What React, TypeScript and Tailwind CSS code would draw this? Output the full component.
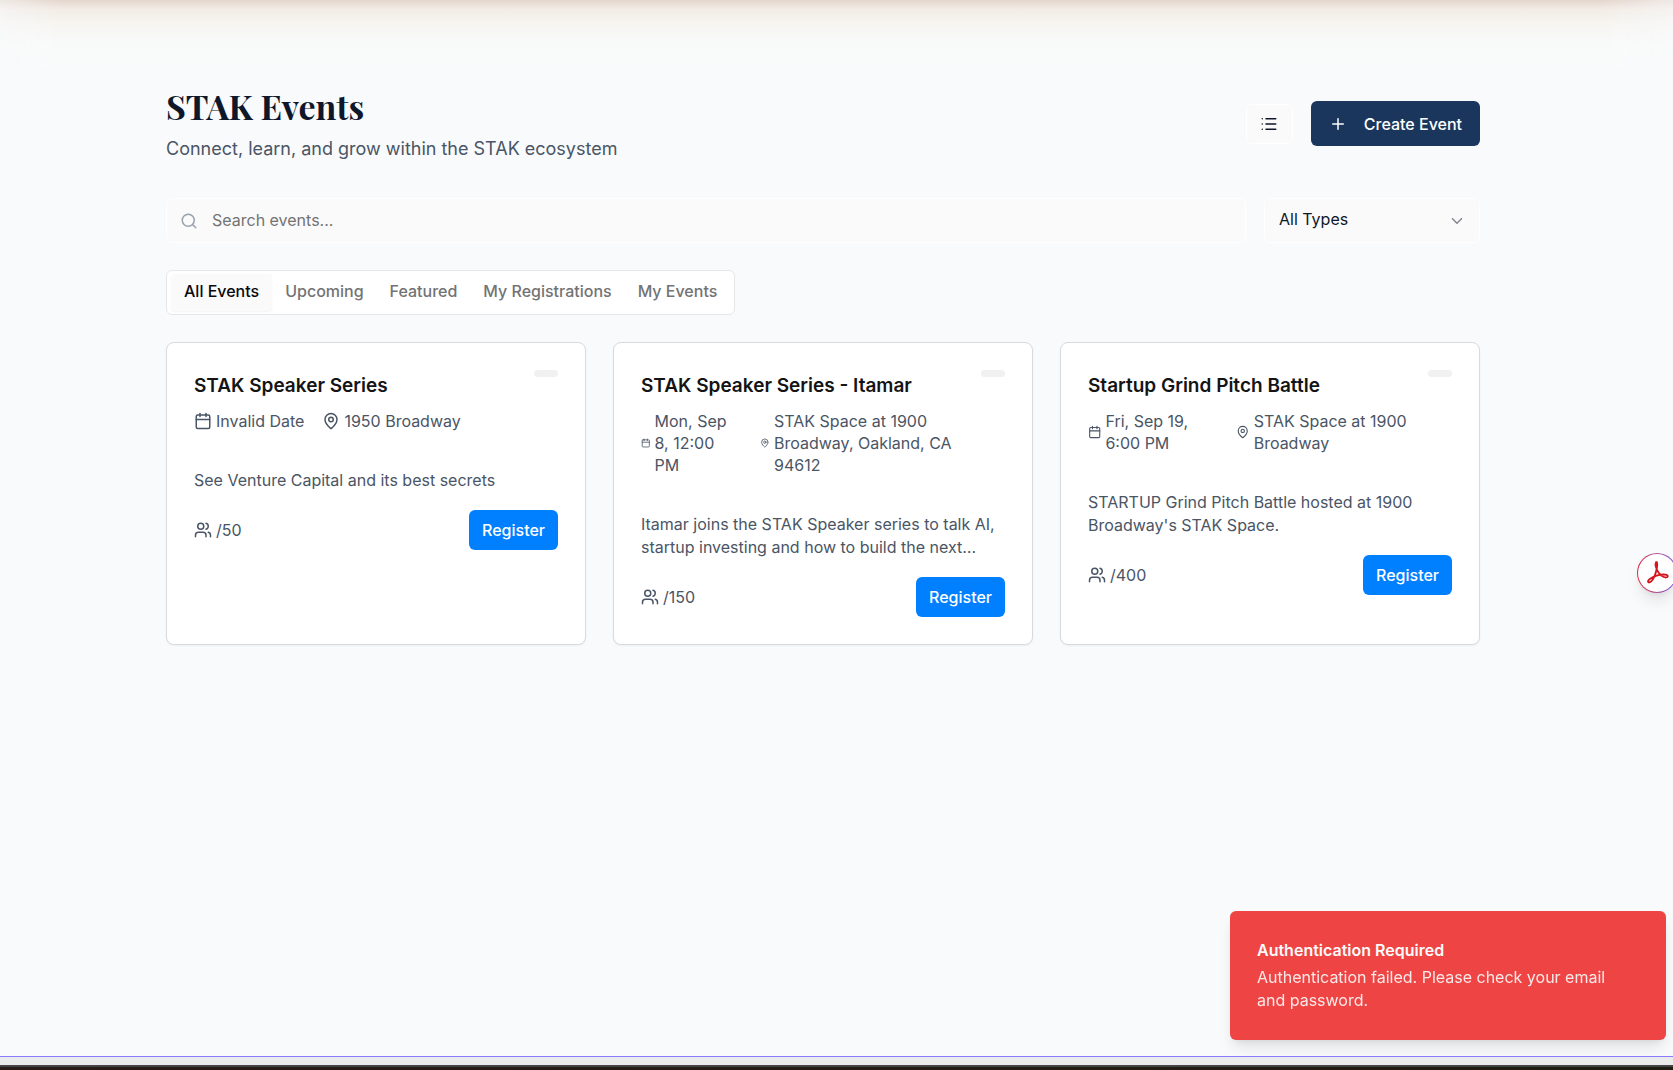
import { Calendar, ChevronDown, List, MapPin, Plus, Search, Users } from 'lucide-react'

type EventItem = {
  title: string
  date: string
  place: string
  description: string
  capacity: number
}

const events: EventItem[] = [
  {
    title: 'STAK Speaker Series',
    date: 'Invalid Date',
    place: '1950 Broadway',
    description: 'See Venture Capital and its best secrets',
    capacity: 50,
  },
  {
    title: 'STAK Speaker Series - Itamar',
    date: 'Mon, Sep 8, 12:00 PM',
    place: 'STAK Space at 1900 Broadway, Oakland, CA 94612',
    description: 'Itamar joins the STAK Speaker series to talk AI, startup investing and how to build the next…',
    capacity: 150,
  },
  {
    title: 'Startup Grind Pitch Battle',
    date: 'Fri, Sep 19, 6:00 PM',
    place: 'STAK Space at 1900 Broadway',
    description: "STARTUP Grind Pitch Battle hosted at 1900 Broadway's STAK Space.",
    capacity: 400,
  },
]

const tabs = ['All Events', 'Upcoming', 'Featured', 'My Registrations', 'My Events']

function EventCard({ event }: { event: EventItem }) {
  return (
    <article className="flex flex-col rounded-lg border border-[#d9dadc] bg-white p-[27px] shadow-xs">
      <div className="flex items-start justify-between">
        <div className="min-w-0 flex-1">
          <h2 className="text-[19px] leading-8 font-semibold text-[#141414]">{event.title}</h2>
          <div className="mt-2 flex items-center gap-[18px] leading-[22px] text-gray-600">
            <div className="flex items-center">
              <Calendar className="mr-1 h-[18px] w-[18px]" />
              <span>{event.date}</span>
            </div>
            <div className="flex items-center">
              <MapPin className="mr-1 h-[18px] w-[18px]" />
              <span>{event.place}</span>
            </div>
          </div>
        </div>
        <span className="h-[7px] w-6 rounded-full bg-[#f1f1f1]" />
      </div>
      <p className="mt-[37px] leading-[23px] text-gray-600">{event.description}</p>
      <div className="mt-[18px] flex items-center justify-between">
        <span className="flex items-center text-gray-600">
          <Users className="mr-1 h-[18px] w-[18px]" />/{event.capacity}
        </span>
        <button className="h-10 rounded-md bg-[#007fff] px-[13px] font-medium text-white">Register</button>
      </div>
    </article>
  )
}

export default function App() {
  return (
    <div className="relative flex min-h-screen flex-col overflow-hidden bg-[#f9fafc] font-[Inter,sans-serif] text-base text-[#0f172a]">
      <div className="absolute inset-x-0 top-0 h-[68px] bg-[linear-gradient(to_bottom,#e3d6cc_0px,#ece2db_5px,#f4ece6_10px,#f2efe9_14px,#f6f5f1_24px,#f8f8f8_38px,#f8fbf9_50px,#f9f9fa_60px,#f9fafc_68px)] [mask-image:linear-gradient(to_right,rgba(0,0,0,0.5),#000_60px,#000_calc(100%-70px),rgba(0,0,0,0.5))]" />
      <div className="relative grow pr-[27px]">
        <main className="mx-auto w-full max-w-[1314px] pt-[84px]">
          <header className="flex items-center justify-between">
            <div>
              <h1 className="font-['Playfair_Display','Liberation_Serif',serif] text-[34px] leading-[45px] font-bold">
                STAK Events
              </h1>
              <p className="mt-1.5 text-lg leading-7 text-gray-600">
                Connect, learn, and grow within the STAK ecosystem
              </p>
            </div>
            <div className="flex items-center gap-[18px]">
              <button
                aria-label="List view"
                className="flex h-10 w-[47px] items-center justify-center rounded-md border border-white bg-[#fafafa]"
              >
                <List className="h-[18px] w-[18px]" />
              </button>
              <button className="flex h-[45px] items-center rounded-md bg-[#1a365d] px-[18px] font-medium text-white">
                <Plus className="mr-[17px] h-[18px] w-[18px]" />
                Create Event
              </button>
            </div>
          </header>

          <div className="mt-[35px] flex gap-[18px]">
            <div className="relative flex-1">
              <Search className="absolute top-[14px] left-[14px] h-[18px] w-[18px] text-gray-400" />
              <input
                aria-label="Search events"
                placeholder="Search events..."
                className="h-[45px] w-full rounded-md border border-white bg-[#fafafa] pb-0.5 pl-[45px] placeholder:text-[#737373]"
              />
            </div>
            <div className="relative w-[216px]">
              <select
                aria-label="Event type"
                className="h-[45px] w-full appearance-none rounded-md border border-white bg-[#fafafa] px-[14px] pb-[3px]"
              >
                <option>All Types</option>
              </select>
              <ChevronDown className="pointer-events-none absolute top-[14px] right-[14px] h-[18px] w-[18px] opacity-50" />
            </div>
          </div>

          <div
            role="tablist"
            className="mt-[27px] inline-flex h-[45px] items-center rounded-md border border-gray-200 bg-white p-1 align-top"
          >
            {tabs.map((tab, i) => (
              <button
                key={tab}
                role="tab"
                aria-selected={i === 0}
                className="h-[37px] rounded-sm px-[13px] pb-1 font-medium text-[#737373] aria-selected:bg-[#fafafa] aria-selected:text-[#0a0a0a] aria-selected:shadow-xs"
              >
                {tab}
              </button>
            ))}
          </div>

          <section className="mt-[27px] grid grid-cols-3 gap-[27px]">
            {events.map((event) => (
              <EventCard key={event.title} event={event} />
            ))}
          </section>
        </main>
      </div>

      <button
        aria-label="Open in Acrobat"
        className="absolute top-[553px] -right-1 h-10 w-10 rounded-full bg-linear-to-r from-[#e0243a] to-[#7a4fe0] p-px shadow-lg"
      >
        <span className="flex h-full w-full items-center justify-center rounded-full bg-white">
          <svg viewBox="0 0 24 24" className="h-6 w-6" fill="none" stroke="#d4151b" strokeWidth="1.8" strokeLinejoin="round">
            <path d="M12 1.200c-1.700 0-1.700 2.300-1.200 4.300 1 4 4 8.500 7.500 10.300 1.900 1 4.300.9 4.500-.4.200-1.400-2-2-4.500-1.900-4.500.2-9.500 1.900-12.800 4-1.900 1.300-2.900 2.600-2.300 3.500.8 1.100 2.700 0 4.200-2 2.700-3.700 4-9 4.700-13.500.3-2.300.2-4.300-1.100-4.300z" />
          </svg>
        </span>
      </button>

      <div
        role="alert"
        className="absolute right-[7px] bottom-[30px] w-[436px] rounded-md bg-[#ef4444] py-7 pr-[54px] pl-[27px] text-neutral-50 shadow-lg"
      >
        <div className="leading-[23px] font-semibold">Authentication Required</div>
        <div className="mt-1 leading-[23px] opacity-90">Authentication failed. Please check your email and password.</div>
      </div>

      <footer className="relative border-t border-[#8b7cff] bg-[#ebebeb] pt-2">
        <div className="h-[5px] border-t-2 border-[#444444] bg-linear-to-r from-[#2a1c18] to-[#1f1d12]" />
      </footer>
    </div>
  )
}
